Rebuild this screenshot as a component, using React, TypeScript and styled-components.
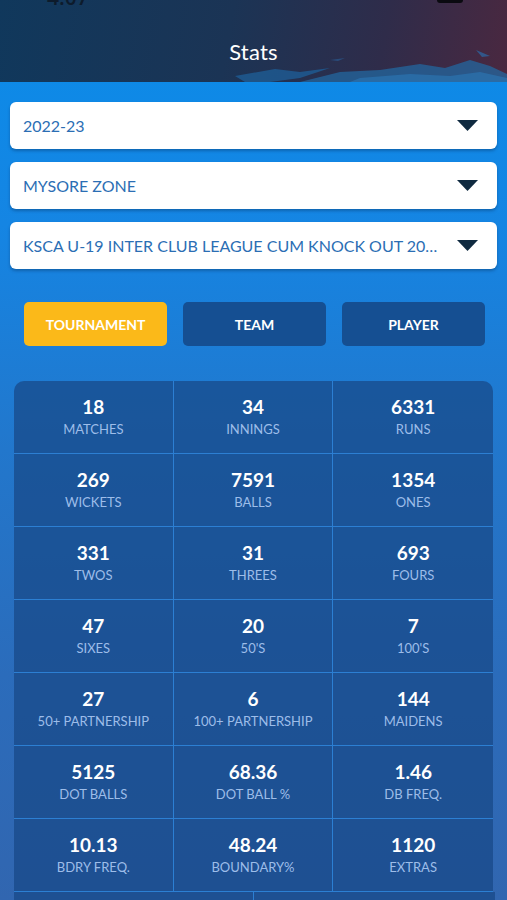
import styled, { createGlobalStyle } from 'styled-components'

const GlobalStyle = createGlobalStyle`
  html, body {
    margin: 0;
    padding: 0;
  }
  body {
    font-family: Lato, "Open Sans", sans-serif;
    background: #2d69b3;
  }
  * {
    box-sizing: border-box;
  }
`

const Screen = styled.div`
  width: 507px;
  height: 900px;
  overflow: hidden;
  display: flex;
  flex-direction: column;
  background: linear-gradient(180deg, #0a8ce9 0%, #1585e3 25%, #2277cc 50%, #2b6cbb 75%, #3166b0 100%);
`

const Header = styled.header`
  position: relative;
  height: 82px;
  flex-shrink: 0;
  overflow: hidden;
  background: linear-gradient(100deg, #10385c 0%, #1b3455 45%, #2f2c4a 75%, #4a2840 100%);
  display: flex;
  flex-direction: column;
  align-items: center;
`

const Brush = styled.svg`
  position: absolute;
  left: 0;
  bottom: 0;
  width: 507px;
  height: 34px;
  pointer-events: none;
`

const StatusBar = styled.div`
  width: 100%;
  height: 22px;
  margin-top: -14px;
  padding: 0 44px 0 47px;
  display: flex;
  align-items: center;
  justify-content: space-between;
`

const Time = styled.span`
  font-family: "Open Sans", sans-serif;
  font-size: 21px;
  font-weight: 600;
  color: #0d1b2c;
`

const StatusIcons = styled.div`
  display: flex;
  align-items: center;
  gap: 14px;
`

const Battery = styled.div`
  width: 26px;
  height: 12px;
  border-radius: 3px;
  background: #0a0a10;
`

const Title = styled.h1`
  position: relative;
  margin: 30px 0 0;
  font-size: 22px;
  font-weight: 400;
  color: #ffffff;
  letter-spacing: 0.2px;
`

const Body = styled.div`
  display: flex;
  flex-direction: column;
  padding: 20px 10px 0;
`

const Selects = styled.div`
  display: flex;
  flex-direction: column;
  gap: 13px;
`

const Select = styled.div`
  height: 47px;
  border-radius: 6px;
  background: #ffffff;
  box-shadow: 0 2px 3px rgba(10, 40, 80, 0.35);
  display: flex;
  align-items: center;
  padding: 0 19px 0 13px;
  gap: 14px;
`

const SelectText = styled.span`
  flex: 1;
  min-width: 0;
  white-space: nowrap;
  overflow: hidden;
  text-overflow: ellipsis;
  font-size: 16px;
  color: #2b6eb4;
`

const Caret = styled.svg`
  width: 21px;
  height: 11px;
  flex-shrink: 0;
`

const Tabs = styled.div`
  display: grid;
  grid-template-columns: repeat(3, 1fr);
  gap: 16px;
  padding: 0 12px 0 14px;
  margin-top: 33px;
`

const Tab = styled.div<{ $active?: boolean }>`
  height: 44px;
  border-radius: 5px;
  display: flex;
  align-items: center;
  justify-content: center;
  font-size: 14px;
  font-weight: 700;
  color: #ffffff;
  background: ${(p) => (p.$active ? '#fbb919' : '#154f92')};
`

const Grid = styled.div`
  margin: 35px 4px 0 4px;
  display: grid;
  grid-template-columns: repeat(3, 1fr);
  border-radius: 10px 10px 0 0;
  overflow: hidden;
  background: rgba(24, 72, 135, 0.72);
`

const Cell = styled.div<{ $col: number }>`
  height: 73px;
  display: flex;
  flex-direction: column;
  align-items: center;
  padding-top: 15px;
  border-bottom: 1px solid #2c7fd3;
  border-right: ${(p) => (p.$col < 2 ? '1px solid #2c7fd3' : 'none')};
`

const Value = styled.div`
  font-size: 19px;
  font-weight: 700;
  color: #ffffff;
  line-height: 22px;
`

const Label = styled.div`
  margin-top: 3px;
  font-size: 13px;
  color: #9dbde9;
  line-height: 16px;
`

const LastRow = styled.div`
  margin: 0 2px 0 4px;
  display: grid;
  grid-template-columns: 240px 1fr;
  height: 30px;
  background: rgba(24, 72, 135, 0.72);
`

const LastCell = styled.div`
  border-right: 1px solid #2c7fd3;
`

const stats = [
  { value: '18', label: 'MATCHES' },
  { value: '34', label: 'INNINGS' },
  { value: '6331', label: 'RUNS' },
  { value: '269', label: 'WICKETS' },
  { value: '7591', label: 'BALLS' },
  { value: '1354', label: 'ONES' },
  { value: '331', label: 'TWOS' },
  { value: '31', label: 'THREES' },
  { value: '693', label: 'FOURS' },
  { value: '47', label: 'SIXES' },
  { value: '20', label: "50'S" },
  { value: '7', label: "100'S" },
  { value: '27', label: '50+ PARTNERSHIP' },
  { value: '6', label: '100+ PARTNERSHIP' },
  { value: '144', label: 'MAIDENS' },
  { value: '5125', label: 'DOT BALLS' },
  { value: '68.36', label: 'DOT BALL %' },
  { value: '1.46', label: 'DB FREQ.' },
  { value: '10.13', label: 'BDRY FREQ.' },
  { value: '48.24', label: 'BOUNDARY%' },
  { value: '1120', label: 'EXTRAS' }
]

const selects = ['2022-23', 'MYSORE ZONE', 'KSCA U-19 INTER CLUB LEAGUE CUM KNOCK OUT 2022-23']

const App = (): React.ReactElement => {
  return (
    <>
      <GlobalStyle />
      <Screen>
        <Header>
          {/* painted brush streaks along the bottom of the header */}
          <Brush viewBox="0 0 507 34">
            <path d="M235 28 L275 21 L300 24 L330 20 L300 30 L270 34 L245 34 Z" fill="#1e5c95" opacity="0.8" />
            <path d="M300 34 L340 24 L380 22 L420 16 L445 20 L470 12 L490 18 L507 26 L507 34 Z" fill="#23679f" opacity="0.75" />
            <path d="M360 30 L410 26 L450 28 L480 24 L507 30 L507 34 L350 34 Z" fill="#2c78b8" opacity="0.6" />
            <path d="M476 2 L490 8 L482 9 Z" fill="#2b6aa8" opacity="0.7" />
            <path d="M330 12 L345 10 L338 13 Z" fill="#2a5f99" opacity="0.6" />
          </Brush>
          <StatusBar>
            <Time>4:07</Time>
            <StatusIcons>
              <svg width="12" height="8" viewBox="0 0 12 8">
                <path d="M1 1 L11 1 L6 7 Z" fill="#0d1020" />
              </svg>
              <Battery />
            </StatusIcons>
          </StatusBar>
          <Title>Stats</Title>
        </Header>
        <Body>
          <Selects>
            {selects.map((s) => (
              <Select key={s}>
                <SelectText>{s}</SelectText>
                <Caret viewBox="0 0 21 11">
                  <path d="M0 0 L21 0 L10.5 11 Z" fill="#0f2a40" />
                </Caret>
              </Select>
            ))}
          </Selects>
          <Tabs>
            <Tab $active>TOURNAMENT</Tab>
            <Tab>TEAM</Tab>
            <Tab>PLAYER</Tab>
          </Tabs>
          <Grid>
            {stats.map((s, i) => (
              <Cell key={s.label} $col={i % 3}>
                <Value>{s.value}</Value>
                <Label>{s.label}</Label>
              </Cell>
            ))}
          </Grid>
          <LastRow>
            <LastCell />
            <div />
          </LastRow>
        </Body>
      </Screen>
    </>
  )
}

export default App
